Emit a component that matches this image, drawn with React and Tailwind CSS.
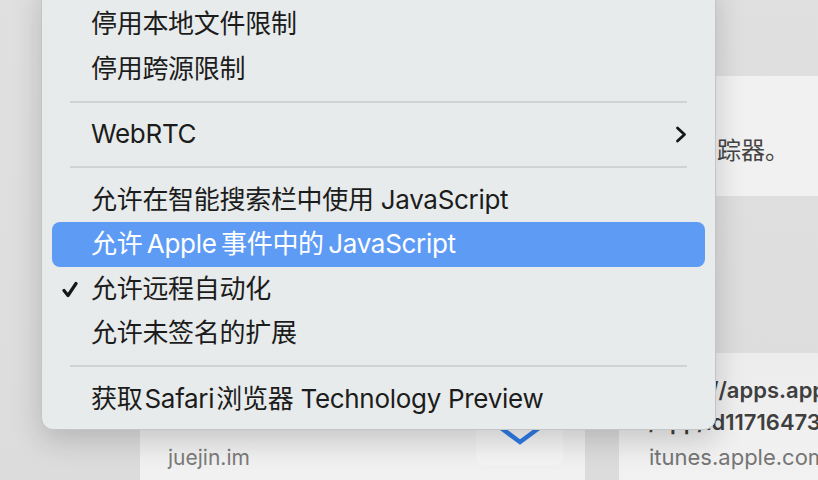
import React from "react";

const FONT = { fontFamily: '"Inter", "Noto Sans CJK SC", sans-serif' };

function Row({ children, highlight, check, submenu }) {
  return (
    <div
      className={
        "relative flex h-[44.5px] items-center rounded-[8px] pl-[39px] pr-[18px] text-[26px] leading-none tracking-[-0.3px] " +
        (highlight ? "bg-[#5e9bf5] text-white" : "text-[#1c1c1c]")
      }
    >
      {check && (
        <svg className="absolute left-[10px] top-[14px]" width="16" height="17" viewBox="0 0 16 17" fill="none">
          <path d="M2 9.5 L6 14.5 L14 2.5" stroke="#161616" strokeWidth="3.2" strokeLinecap="round" strokeLinejoin="round" />
        </svg>
      )}
      <span className="flex-1 whitespace-nowrap">{children}</span>
      {submenu && (
        <svg width="12" height="17" viewBox="0 0 12 17" fill="none">
          <path d="M2.5 2 L9.5 8.5 L2.5 15" stroke="#161616" strokeWidth="2.8" strokeLinecap="round" strokeLinejoin="round" />
        </svg>
      )}
    </div>
  );
}

function Sep() {
  return (
    <div className="flex h-[21px] items-center px-[18px]">
      <div className="h-[2px] w-full bg-[#d0d3d3]" />
    </div>
  );
}

export default function App() {
  return (
    <div className="relative h-[480px] w-[818px] overflow-hidden bg-[#dfdfdf]" style={FONT}>
      {/* background page */}
      <div className="flex flex-col bg-gradient-to-b from-[#e0e0e0] to-[#dcdcdc]">
        <div className="h-[76px]" />
        <div className="flex justify-end">
          <div className="h-[120px] w-[200px] bg-[#f1f1f1] pl-[99px] pt-[60px] text-[24px] leading-[30px] text-[#444]">
            <span className="whitespace-nowrap">踪器。</span>
          </div>
        </div>
        <div className="h-[157px]" />
        <div className="flex gap-[34px] pl-[140px]">
          <div className="flex h-[140px] w-[445px] shrink-0 items-end justify-between rounded-[12px] bg-gradient-to-b from-[#ebebeb] to-[#f2f2f2] pl-[28px] pr-[22px]">
            <span className="mb-[22px] text-[21px] leading-[26px] text-[#7a7a7a]">juejin.im</span>
            <div className="mb-[28px] flex h-[87px] w-[87px] items-end justify-center rounded-[8px] bg-[#f4f4f4] pb-[20px]">
              <svg width="44" height="20" viewBox="0 0 44 20" fill="none">
                <path d="M3 3 L22 17 L41 3" stroke="#2f7be6" strokeWidth="4.5" />
              </svg>
            </div>
          </div>
          <div className="h-[140px] min-w-0 flex-1 overflow-hidden rounded-tl-[12px] bg-gradient-to-b from-[#ededed] to-[#f2f2f2] pl-[30px] pt-[21px]">
            <div className="whitespace-nowrap text-[22px] font-semibold leading-[32px] text-[#3f3f3f]">
              https://apps.apple.com/cn/
            </div>
            <div className="whitespace-nowrap text-[22px] font-semibold leading-[32px] text-[#3f3f3f]">
              /app/id1171647386
            </div>
            <div className="whitespace-nowrap text-[22px] leading-[38px] text-[#757575]">itunes.apple.com</div>
          </div>
        </div>
      </div>

      {/* context menu overlay */}
      <div className="absolute left-[41px] top-[-20px] h-[450px] w-[675px] rounded-[12px] border border-[#c4c6c6] bg-[#e8ebeb] px-[10px] pt-[21px] shadow-[0_10px_30px_rgba(0,0,0,0.18)]">
        <Row>停用本地文件限制</Row>
        <Row>停用跨源限制</Row>
        <Sep />
        <Row submenu>WebRTC</Row>
        <Sep />
        <Row>允许在智能搜索栏中使用 JavaScript</Row>
        <Row highlight>{"允许\u2009Apple\u2009事件中的\u2009JavaScript"}</Row>
        <Row check>允许远程自动化</Row>
        <Row>允许未签名的扩展</Row>
        <Sep />
        <Row>{"获取\u200aSafari\u200a浏览器 Technology Preview"}</Row>
      </div>
    </div>
  );
}
